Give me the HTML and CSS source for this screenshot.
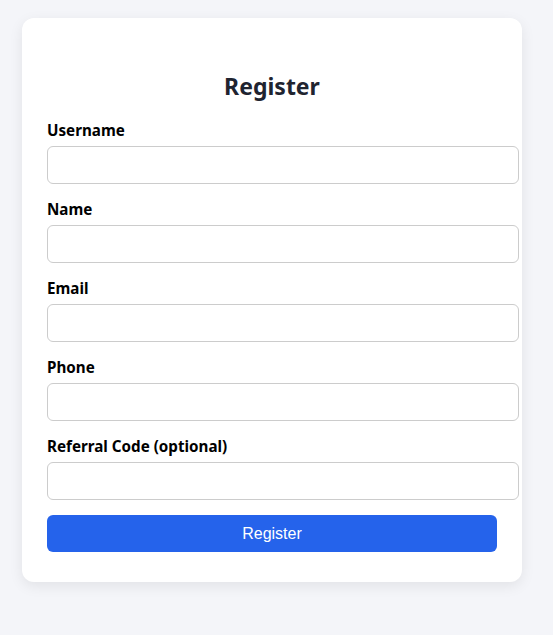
FILE: index.html
```html
<!DOCTYPE html>
<html>
<head>
<meta charset="utf-8">
<link rel="stylesheet" href="styles.css">
</head>
<body>
<div class="card">
  <h2 class="title">Register</h2>
  <form class="form">
    <label class="field">
      <span class="label">Username</span>
      <input class="input" type="text">
    </label>
    <label class="field">
      <span class="label">Name</span>
      <input class="input" type="text">
    </label>
    <label class="field">
      <span class="label">Email</span>
      <input class="input" type="email">
    </label>
    <label class="field">
      <span class="label">Phone</span>
      <input class="input" type="text">
    </label>
    <label class="field">
      <span class="label">Referral Code (optional)</span>
      <input class="input" type="text">
    </label>
    <button class="btn" type="button">Register</button>
  </form>
</div>
</body>
</html>
```
FILE: styles.css
```css
html, body {
  margin: 0;
  padding: 0;
}
body {
  background: #f4f5f9;
  font-family: "Noto Sans", "Open Sans", sans-serif;
  padding: 18px 22px;
}
.card {
  width: 450px;
  padding: 30px 25px 30px;
  background: #fff;
  border-radius: 12px;
  box-shadow: 0 4px 14px rgba(0, 0, 0, 0.08);
}
.title {
  margin: 22px 0 18px;
  text-align: center;
  font-size: 23px;
  font-weight: 700;
  color: #1f2430;
  line-height: 32px;
}
.form {
  display: flex;
  flex-direction: column;
}
.field {
  display: flex;
  flex-direction: column;
  margin-bottom: 15px;
}
.label {
  font-size: 15.2px;
  font-weight: 700;
  color: #000;
  line-height: 20px;
  margin-bottom: 6px;
}
.input {
  width: 100%;
  box-sizing: content-box;
  height: 16px;
  padding: 10px;
  border: 1px solid #ccc;
  border-radius: 6px;
  font-size: 14px;
  font-family: "Liberation Sans", Arial, sans-serif;
  outline: none;
}
.btn {
  height: 37px;
  background: #2563eb;
  color: #fff;
  border: none;
  border-radius: 6px;
  font-family: "Liberation Sans", Arial, sans-serif;
  font-size: 16px;
}
```
